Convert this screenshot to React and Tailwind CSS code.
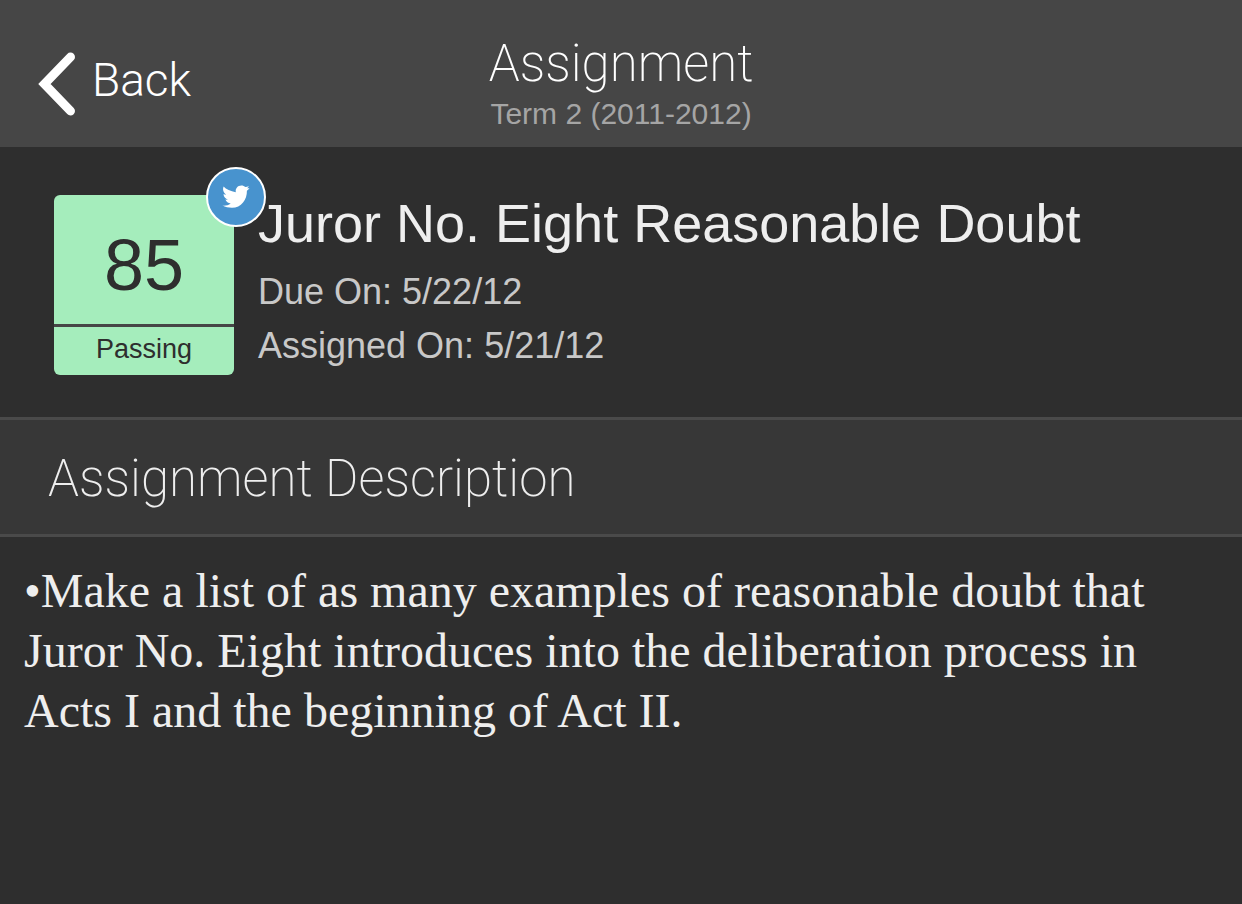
const assignment = {
  title: 'Juror No. Eight Reasonable Doubt',
  term: 'Term 2 (2011-2012)',
  score: 85,
  status: 'Passing',
  dueOn: '5/22/12',
  assignedOn: '5/21/12',
  description:
    '•Make a list of as many examples of reasonable doubt that Juror No. Eight introduces into the deliberation process in Acts I and the beginning of Act II.',
};

const BackIcon = () => (
  <svg width="38" height="64" viewBox="0 0 38 64" fill="none" aria-hidden="true">
    <path d="M32.5 5 L6.5 32 L32.5 59" stroke="#fff" strokeWidth="9" strokeLinecap="round" strokeLinejoin="miter" />
  </svg>
);

const TwitterIcon = () => (
  <svg width="28" height="24" viewBox="0 0 28 24" fill="#fff" aria-hidden="true">
    <path d="M1.6 1.6C4 4.4 8.6 6.4 13.8 7.2C13.2 3.4 15.8 .5 19.3 .5C21 .5 22.4 1.1 23.4 2.1C24.6 2 25.8 1.6 26.8 1C26.5 1.9 25.9 2.7 25.1 3.3C26 3.4 26.8 3.2 27.5 2.9C26.9 4.1 26 5 24.9 5.7C25.1 14.5 19.4 22.8 9.9 22.8C6.6 22.8 3.2 22.2 .5 20.6C3.6 20.9 6.5 20 8.7 18.4C6.2 18.3 4.2 16.9 3.4 14.6C4.3 14.8 5.2 14.8 6 14.6C3.4 13.9 1.6 11.8 1.5 9C2.3 9.4 3.2 9.7 4.1 9.7C1.6 7.9 .3 4.8 1.6 1.6Z" />
  </svg>
);

const Header = () => (
  <header className="grid grid-cols-[1fr_auto_1fr] bg-[#464646] px-[38px] pt-8 pb-3 font-['Roboto',sans-serif] text-white">
    <button type="button" className="flex items-center gap-4 self-center justify-self-start text-[46px] leading-[56px] font-light">
      <BackIcon />
      <span className="pb-2">Back</span>
    </button>
    <div className="text-center">
      <h1 className="text-[51px] leading-[64px] font-extralight">Assignment</h1>
      <p className="pb-1 font-['Liberation_Sans',sans-serif] text-[30px] leading-[35px] text-[#a5a5a5]">{assignment.term}</p>
    </div>
  </header>
);

const GradeCard = () => (
  <div className="relative w-[180px] shrink-0 rounded-md bg-[#a5edbc] text-center text-[#2e2e2e]">
    <p className="pt-3 text-[72px] leading-[117px]">{assignment.score}</p>
    <p className="border-t-3 border-[#464646] pb-1 text-[27px] leading-[44px]">{assignment.status}</p>
    <a
      href="#twitter"
      aria-label="Twitter"
      className="absolute -top-7 -right-8 flex size-[60px] items-center justify-center rounded-full border-2 border-white bg-[#4893ce]"
    >
      <TwitterIcon />
    </a>
  </div>
);

const App = () => {
  return (
    <div className="min-h-screen bg-[#2e2e2e] font-['Liberation_Sans',sans-serif] text-[#eeeeee]">
      <Header />

      <section className="flex gap-6 px-[54px] pt-12 pb-[42px]">
        <GradeCard />
        <div>
          <h2 className="text-[54px] leading-[56px]">{assignment.title}</h2>
          <div className="pt-3.5 text-[36px] leading-[54px] text-[#c8c8c8]">
            <p>Due On: {assignment.dueOn}</p>
            <p>Assigned On: {assignment.assignedOn}</p>
          </div>
        </div>
      </section>

      <section>
        <h2 className="border-y-3 border-[#4a4a4a] bg-[#373737] px-12 pt-1 font-['Roboto',sans-serif] text-[51px] leading-[110px] font-extralight">
          Assignment Description
        </h2>
        <p className="px-6 py-6 font-['Liberation_Serif',serif] text-[48px] leading-[60px]">{assignment.description}</p>
      </section>
    </div>
  );
};

export default App;
